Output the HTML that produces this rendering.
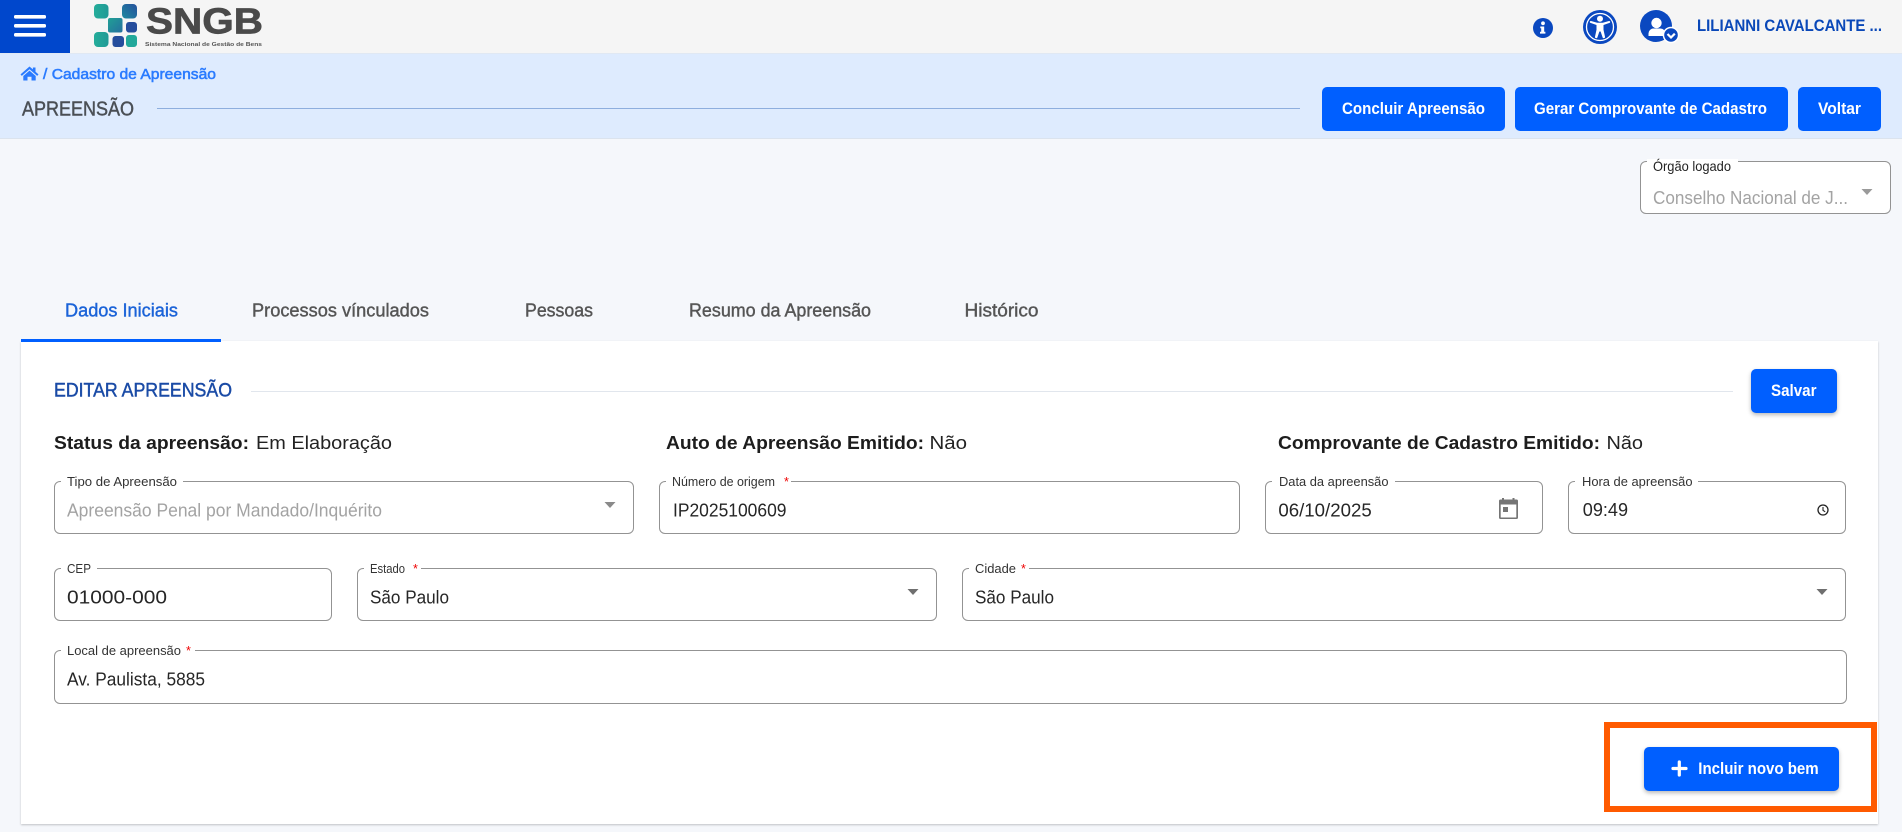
<!DOCTYPE html>
<html lang="pt-BR"><head><meta charset="utf-8"><title>SNGB - Apreensão</title>
<style>
html,body{margin:0;padding:0;width:1902px;height:832px;overflow:hidden;background:#f5f7fb;font-family:"Liberation Sans",Arial,sans-serif}
.a{position:absolute;box-sizing:border-box}
.btn{background:#005fff;border-radius:5px}
.sh{box-shadow:0 2px 4px rgba(0,0,0,.28)}
.f{background:#fff;border:1px solid #939393;border-radius:6px}
.n{background:#fff;height:4px}
svg{position:absolute;left:0;top:0}
text{font-family:"Liberation Sans",Arial,sans-serif}
.m{stroke-width:.4px}
.lb{font-size:13.2px;fill:#333}
.v{font-size:18.2px;fill:#262626}
.g{font-size:18.2px;fill:#a3a3a3}
.t{font-size:18.2px;fill:#555;stroke:#555}
.w{font-size:16.2px;font-weight:bold;fill:#fff}
.b{font-size:18.6px;font-weight:bold;fill:#1d1d1d}
.r{font-size:18.4px;fill:#222}
.s{font-size:12.6px;fill:#e00}
</style></head><body>
<div class="a" style="left:0;top:0;width:1902px;height:53px;background:#f5f5f5"></div>
<div class="a" style="left:0;top:0;width:70px;height:53px;background:#0047cc"></div>
<div class="a" style="left:0;top:53px;width:1902px;height:86px;background:#deebfe;border-bottom:1px solid #dbe3ee;border-top:1px solid #e0e8f3"></div>
<div class="a" style="left:157px;top:108px;width:1143px;height:1px;background:#8eaede"></div>
<div class="a btn" style="left:1322px;top:87px;width:183px;height:44px"></div>
<div class="a btn" style="left:1515px;top:87px;width:273px;height:44px"></div>
<div class="a btn" style="left:1798px;top:87px;width:83px;height:44px"></div>

<div class="a f" style="left:1640px;top:161px;width:251px;height:53px"></div>
<div class="a n" style="left:1647px;top:159px;width:91px;height:5px;background:#fff"></div>

<div class="a" style="left:21px;top:341px;width:1857px;height:483px;background:#fff;box-shadow:0 1px 2px rgba(0,0,0,.22)"></div>
<div class="a" style="left:21px;top:339px;width:200px;height:3px;background:#005fff"></div>
<div class="a" style="left:251px;top:391px;width:1482px;height:1px;background:#e1e6ed"></div>
<div class="a btn sh" style="left:1751px;top:369px;width:86px;height:44px"></div>

<div class="a f" style="left:54px;top:481px;width:580px;height:53px"></div>
<div class="a n" style="left:61px;top:480px;width:122px"></div>
<div class="a f" style="left:659px;top:481px;width:581px;height:53px"></div>
<div class="a n" style="left:666px;top:480px;width:125px"></div>
<div class="a f" style="left:1265px;top:481px;width:278px;height:53px"></div>
<div class="a n" style="left:1272px;top:480px;width:123px"></div>
<div class="a f" style="left:1568px;top:481px;width:278px;height:53px"></div>
<div class="a n" style="left:1575px;top:480px;width:123px"></div>

<div class="a f" style="left:54px;top:568px;width:278px;height:53px"></div>
<div class="a n" style="left:61px;top:567px;width:36px"></div>
<div class="a f" style="left:357px;top:568px;width:580px;height:53px"></div>
<div class="a n" style="left:364px;top:567px;width:57px"></div>
<div class="a f" style="left:962px;top:568px;width:884px;height:53px"></div>
<div class="a n" style="left:969px;top:567px;width:60px"></div>
<div class="a f" style="left:54px;top:650px;width:1793px;height:54px"></div>
<div class="a n" style="left:61px;top:649px;width:134px"></div>

<div class="a" style="left:1604px;top:721.500px;width:273px;height:90px;border:6px solid #ff5a00"></div>
<div class="a btn sh" style="left:1644px;top:747px;width:195px;height:44px"></div>

<svg width="1902" height="832" viewBox="0 0 1902 832" xmlns="http://www.w3.org/2000/svg">
<defs>
<linearGradient id="lg1" x1="0" x2="1" y1="0" y2="0"><stop offset="0" stop-color="#24ad9a"/><stop offset="1" stop-color="#209a96"/></linearGradient>
<linearGradient id="lg2" x1="0" x2="1" y1="1" y2="0"><stop offset="0" stop-color="#1f8a9e"/><stop offset="1" stop-color="#25509d"/></linearGradient>
<linearGradient id="lg3" x1="0" x2="1" y1="0" y2="1"><stop offset="0" stop-color="#20a095"/><stop offset="1" stop-color="#25709f"/></linearGradient>
</defs>
<!-- menu -->
<g fill="#fff"><rect x="14" y="15" width="32" height="3.6" rx="1.5"/><rect x="14" y="24" width="32" height="3.6" rx="1.5"/><rect x="14" y="33" width="32" height="3.6" rx="1.5"/></g>
<!-- logo -->
<rect x="94" y="4" width="14.500" height="14.500" rx="4" fill="url(#lg1)"/>
<rect x="122" y="4" width="15" height="14.500" rx="4" fill="url(#lg2)"/>
<rect x="108" y="18" width="14.500" height="14.500" rx="2" fill="url(#lg3)"/>
<rect x="126" y="22" width="11" height="10.500" rx="3" fill="#254d9c"/>
<rect x="94" y="32" width="14.500" height="15" rx="4" fill="url(#lg1)"/>
<rect x="112.500" y="36" width="11.500" height="11" rx="3" fill="#254d9c"/>
<rect x="126" y="35" width="11" height="12" rx="3" fill="#22a89a"/>
<text x="146" y="33.500" font-size="36" font-weight="bold" fill="#4a4a4a" stroke="#4a4a4a" stroke-width=".7" textLength="117" lengthAdjust="spacingAndGlyphs">SNGB</text>
<text x="145" y="46" font-size="5.600" font-weight="bold" fill="#555" textLength="117" lengthAdjust="spacingAndGlyphs">Sistema Nacional de Gestão de Bens</text>
<!-- header icons -->
<circle cx="1543" cy="28" r="10" fill="#0a48c0"/>
<g fill="#fff"><circle cx="1543" cy="23.300" r="1.900"/><path d="M1540.300 26.500h3.900v5.300h1.200v1.800h-5.400v-1.800h1.200v-3.500h-.900z"/></g>
<circle cx="1600" cy="27" r="17" fill="#0a48c0"/>
<circle cx="1600" cy="27" r="13.500" fill="none" stroke="#fff" stroke-width="1.300"/>
<g fill="#fff"><circle cx="1600" cy="18.800" r="3"/><path d="M1591 21c-1.200-.3-1.700 1.500-.5 1.900l6 2.100v4.800l-1.500 6.900c-.3 1.600 2 2.100 2.400.7l2-5.900h1.200l2 5.900c.4 1.400 2.700.9 2.400-.7l-1.500-6.900V25l6-2.100c1.200-.4.700-2.200-.5-1.900l-6.200 1.700h-5.600z"/></g>
<circle cx="1656" cy="26" r="16" fill="#0a48c0"/>
<g fill="#fff"><circle cx="1656.500" cy="23" r="5.200"/><path d="M1648.500 36v-2.500a5 5 0 0 1 5-5h7a5 5 0 0 1 5 5V36z"/></g>
<circle cx="1671" cy="35" r="8.300" fill="#fff"/><circle cx="1671" cy="35" r="6.800" fill="#0a48c0"/>
<path d="M1667.500 34l3.500 3.500 3.800-3.800" fill="none" stroke="#fff" stroke-width="2.200"/>
<text x="1697" y="31" font-size="16.600" font-weight="bold" fill="#0a48b8" textLength="185" lengthAdjust="spacingAndGlyphs">LILIANNI CAVALCANTE ...</text>
<!-- breadcrumb -->
<path d="M29.500 66.500l-9 7.900 1.300 1.500 7.700-6.700 7.700 6.700 1.300-1.500-3-2.700V67.500h-2.600v1.900z" fill="#2a7bff"/>
<path d="M23.300 76l6.200-5.400 6.200 5.400V80.500h-4.200v-3.800h-4V80.500h-4.200z" fill="#2a7bff"/>
<text x="43" y="79" font-size="15.200" fill="#2a7bff" stroke="#2a7bff" style="stroke-width:.55px" textLength="173" lengthAdjust="spacingAndGlyphs">/ Cadastro de Apreensão</text>
<text x="22" y="115.500" font-size="20.200" fill="#4a4f55" stroke="#4a4f55" style="stroke-width:.45px" textLength="112" lengthAdjust="spacingAndGlyphs">APREENSÃO</text>
<!-- buttons -->
<text class="w" x="1342" y="114" textLength="143" lengthAdjust="spacingAndGlyphs">Concluir Apreensão</text>
<text class="w" x="1534" y="114" textLength="233" lengthAdjust="spacingAndGlyphs">Gerar Comprovante de Cadastro</text>
<text class="w" x="1818" y="114" textLength="43" lengthAdjust="spacingAndGlyphs">Voltar</text>
<!-- orgao -->
<text x="1653" y="171" font-size="14" fill="#222" textLength="78" lengthAdjust="spacingAndGlyphs">Órgão logado</text>
<text class="g" x="1653" y="204" textLength="195" lengthAdjust="spacingAndGlyphs">Conselho Nacional de J...</text>
<path d="M1861.500 189h11l-5.500 6z" fill="#9a9a9a"/>
<!-- tabs -->
<text class="m" x="65" y="316.700" font-size="18.200" fill="#1b63d8" stroke="#1b63d8" textLength="113" lengthAdjust="spacingAndGlyphs">Dados Iniciais</text>
<text class="t m" x="252" y="316.700" textLength="177" lengthAdjust="spacingAndGlyphs">Processos vínculados</text>
<text class="t m" x="525" y="316.700" textLength="68" lengthAdjust="spacingAndGlyphs">Pessoas</text>
<text class="t m" x="689" y="316.700" textLength="182" lengthAdjust="spacingAndGlyphs">Resumo da Apreensão</text>
<text class="t m" x="964.500" y="316.700" textLength="74" lengthAdjust="spacingAndGlyphs">Histórico</text>
<!-- section -->
<text x="54" y="396.700" font-size="19" fill="#1a4ba6" stroke="#1a4ba6" style="stroke-width:.45px" textLength="178" lengthAdjust="spacingAndGlyphs">EDITAR APREENSÃO</text>
<text class="w" x="1771" y="396" textLength="45.500" lengthAdjust="spacingAndGlyphs">Salvar</text>
<text class="b" x="54" y="449" textLength="195" lengthAdjust="spacingAndGlyphs">Status da apreensão:</text>
<text class="r" x="256" y="449" textLength="136" lengthAdjust="spacingAndGlyphs">Em Elaboração</text>
<text class="b" x="666" y="449" textLength="258" lengthAdjust="spacingAndGlyphs">Auto de Apreensão Emitido:</text>
<text class="r" x="929.500" y="449" textLength="37.500" lengthAdjust="spacingAndGlyphs">Não</text>
<text class="b" x="1278" y="449" textLength="322" lengthAdjust="spacingAndGlyphs">Comprovante de Cadastro Emitido:</text>
<text class="r" x="1606.500" y="449" textLength="36.500" lengthAdjust="spacingAndGlyphs">Não</text>
<!-- row 1 -->
<text class="lb" x="67" y="486" textLength="110" lengthAdjust="spacingAndGlyphs">Tipo de Apreensão</text>
<text class="g" x="67" y="516.700" textLength="315" lengthAdjust="spacingAndGlyphs">Apreensão Penal por Mandado/Inquérito</text>
<path d="M604.500 502h11l-5.500 6z" fill="#8a8a8a"/>
<text class="lb" x="672" y="486" textLength="103" lengthAdjust="spacingAndGlyphs">Número de origem</text><text class="s" x="784" y="486">*</text>
<text class="v" x="673" y="516.700" textLength="113.500" lengthAdjust="spacingAndGlyphs">IP2025100609</text>
<text class="lb" x="1279" y="486" textLength="109.500" lengthAdjust="spacingAndGlyphs">Data da apreensão</text>
<text class="v" x="1278.400" y="516.700" textLength="93.300" lengthAdjust="spacingAndGlyphs">06/10/2025</text>
<g fill="#757575"><rect x="1502" y="498" width="2" height="3"/><rect x="1512.500" y="498" width="2" height="3"/><path d="M1500.500 499.500h16a1.500 1.500 0 0 1 1.500 1.500v16.500a1.500 1.500 0 0 1-1.500 1.500h-16a1.500 1.500 0 0 1-1.500-1.500V501a1.500 1.500 0 0 1 1.500-1.500z"/></g>
<rect x="1500.700" y="504.500" width="15.600" height="13" fill="#fff"/><rect x="1503" y="507" width="5" height="5" fill="#757575"/>
<text class="lb" x="1582" y="486" textLength="110.500" lengthAdjust="spacingAndGlyphs">Hora de apreensão</text>
<text class="v" x="1582.800" y="516" textLength="45.200" lengthAdjust="spacingAndGlyphs">09:49</text>
<circle cx="1823" cy="510" r="5" fill="none" stroke="#222" stroke-width="1.300"/><path d="M1823 507v3.300l2.200 1.500" fill="none" stroke="#222" stroke-width="1.100"/>
<!-- row 2 -->
<text class="lb" x="67" y="573" textLength="24" lengthAdjust="spacingAndGlyphs">CEP</text>
<text class="v" x="67" y="603.700" textLength="100" lengthAdjust="spacingAndGlyphs">01000-000</text>
<text class="lb" x="370" y="573" textLength="35" lengthAdjust="spacingAndGlyphs">Estado</text><text class="s" x="413" y="573">*</text>
<text class="v" x="370" y="603.700" textLength="79" lengthAdjust="spacingAndGlyphs">São Paulo</text>
<path d="M907.500 589h11l-5.500 6z" fill="#6f6f6f"/>
<text class="lb" x="975" y="573" textLength="41" lengthAdjust="spacingAndGlyphs">Cidade</text><text class="s" x="1021" y="573">*</text>
<text class="v" x="975" y="603.700" textLength="79" lengthAdjust="spacingAndGlyphs">São Paulo</text>
<path d="M1816.500 589h11l-5.500 6z" fill="#6f6f6f"/>
<!-- row 3 -->
<text class="lb" x="67" y="655" textLength="114" lengthAdjust="spacingAndGlyphs">Local de apreensão</text><text class="s" x="186" y="655">*</text>
<text class="v" x="67" y="685.700" textLength="138" lengthAdjust="spacingAndGlyphs">Av. Paulista, 5885</text>
<!-- incluir -->
<path d="M1679.300 762v13M1673 768.500h13" stroke="#fff" stroke-width="3.200" stroke-linecap="round" fill="none"/>
<text class="w" x="1698.300" y="774" textLength="120.400" lengthAdjust="spacingAndGlyphs">Incluir novo bem</text>
</svg>
</body></html>
